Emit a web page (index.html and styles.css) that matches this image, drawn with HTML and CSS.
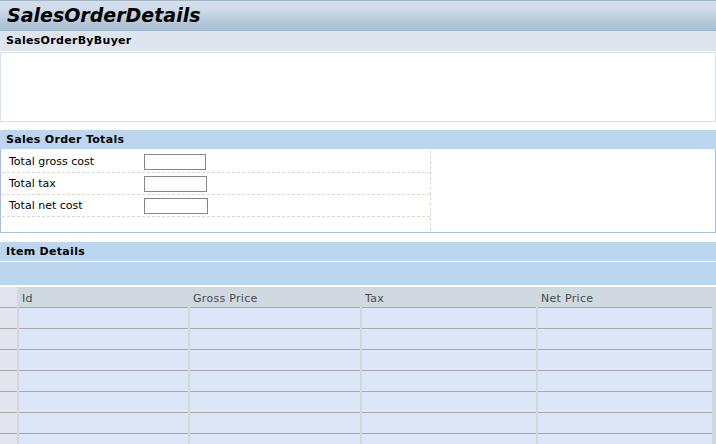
FILE: index.html
```html
<!DOCTYPE html>
<html lang="en">
<head>
    <meta charset="UTF-8">
    <title>SalesOrderDetails</title>
    <link rel="stylesheet" href="styles.css">
</head>
<body>
    <div class="page">
        <div class="title-bar">
            <h1>SalesOrderDetails</h1>
        </div>

        <div class="section-head buyer-head">SalesOrderByBuyer</div>
        <div class="buyer-body"></div>

        <div class="section-head">Sales Order Totals</div>
        <div class="totals-body">
            <div class="totals-form">
                <div class="field-row">
                    <label>Total gross cost</label>
                    <input type="text" class="field-input">
                </div>
                <div class="field-row">
                    <label>Total tax</label>
                    <input type="text" class="field-input wide">
                </div>
                <div class="field-row">
                    <label>Total net cost</label>
                    <input type="text" class="field-input wider">
                </div>
                <div class="field-row empty"></div>
            </div>
        </div>

        <div class="section-head">Item Details</div>
        <div class="toolbar"></div>

        <div class="grid">
            <div class="cell row-head"></div>
            <div class="cell col-head">Id</div>
            <div class="cell col-head">Gross Price</div>
            <div class="cell col-head">Tax</div>
            <div class="cell col-head">Net Price</div>

            <div class="cell row-head"></div><div class="cell"></div><div class="cell"></div><div class="cell"></div><div class="cell"></div>
            <div class="cell row-head"></div><div class="cell"></div><div class="cell"></div><div class="cell"></div><div class="cell"></div>
            <div class="cell row-head"></div><div class="cell"></div><div class="cell"></div><div class="cell"></div><div class="cell"></div>
            <div class="cell row-head"></div><div class="cell"></div><div class="cell"></div><div class="cell"></div><div class="cell"></div>
            <div class="cell row-head"></div><div class="cell"></div><div class="cell"></div><div class="cell"></div><div class="cell"></div>
            <div class="cell row-head"></div><div class="cell"></div><div class="cell"></div><div class="cell"></div><div class="cell"></div>
            <div class="cell row-head"></div><div class="cell"></div><div class="cell"></div><div class="cell"></div><div class="cell"></div>
        </div>
    </div>
</body>
</html>
```

FILE: styles.css
```css
* {
    margin: 0;
    padding: 0;
    box-sizing: border-box;
}

body {
    font-family: "DejaVu Sans", Verdana, sans-serif;
    font-size: 11px;
    color: #000;
    background: #fff;
    width: 716px;
    height: 444px;
    overflow: hidden;
}

.page {
    display: flex;
    flex-direction: column;
}

.title-bar {
    height: 31px;
    border-top: 1px solid #a3b4c4;
    border-bottom: 1px solid #9fb5c8;
    background: linear-gradient(to bottom, #d3dfec 0%, #cfdbe8 30%, #b9cbdc 65%, #a9bed2 100%);
    display: flex;
    align-items: center;
    padding-left: 7px;
}

.title-bar h1 {
    font-size: 19px;
    font-weight: bold;
    font-style: italic;
    color: #000;
    line-height: 1;
}

.section-head {
    height: 19px;
    line-height: 19px;
    padding-left: 6px;
    font-weight: bold;
    letter-spacing: 0.3px;
    background: #bdd6ef;
}

.buyer-head {
    height: 20px;
    line-height: 20px;
    background: #dfe5ef;
}

.buyer-body {
    height: 70px;
    margin-top: 1px;
    margin-bottom: 8px;
    border: 1px solid #d6e3ef;
}

.totals-body {
    height: 84px;
    padding-top: 2px;
    margin-bottom: 9px;
    border: 1px solid #a7bfd7;
    border-top: none;
}

.totals-form {
    width: 430px;
    border-right: 1px dashed #d8d8d0;
}

.field-row {
    height: 22px;
    display: flex;
    align-items: center;
    border-bottom: 1px dashed #d8d8d0;
    margin-left: 1px;
}

.field-row label {
    width: 142px;
    padding-left: 7px;
}

.field-row.empty {
    height: 14px;
    border-bottom: none;
}

.field-input {
    width: 62px;
    height: 16px;
    border: 1px solid #878787;
    background: #fff;
}

.field-input.wide {
    width: 63px;
}

.field-input.wider {
    width: 64px;
}

.toolbar {
    height: 25px;
    margin-top: 1px;
    background: #bdd6ef;
    border-bottom: 2px solid #fff;
}

.grid {
    display: grid;
    grid-template-columns: 17px 169px 170px 174px 174px;
    grid-auto-rows: 21px;
    column-gap: 2px;
    background: #d0d8e0;
}

.cell {
    background: #dce6f7;
    border-bottom: 1px solid #a9a9a9;
}

.cell.row-head {
    background: #e4e6ef;
}

.cell.col-head {
    background: #d0d8e0;
    color: #4a4a4a;
    padding-left: 3px;
    padding-top: 2px;
    line-height: 20px;
    letter-spacing: 0.3px;
}
```
